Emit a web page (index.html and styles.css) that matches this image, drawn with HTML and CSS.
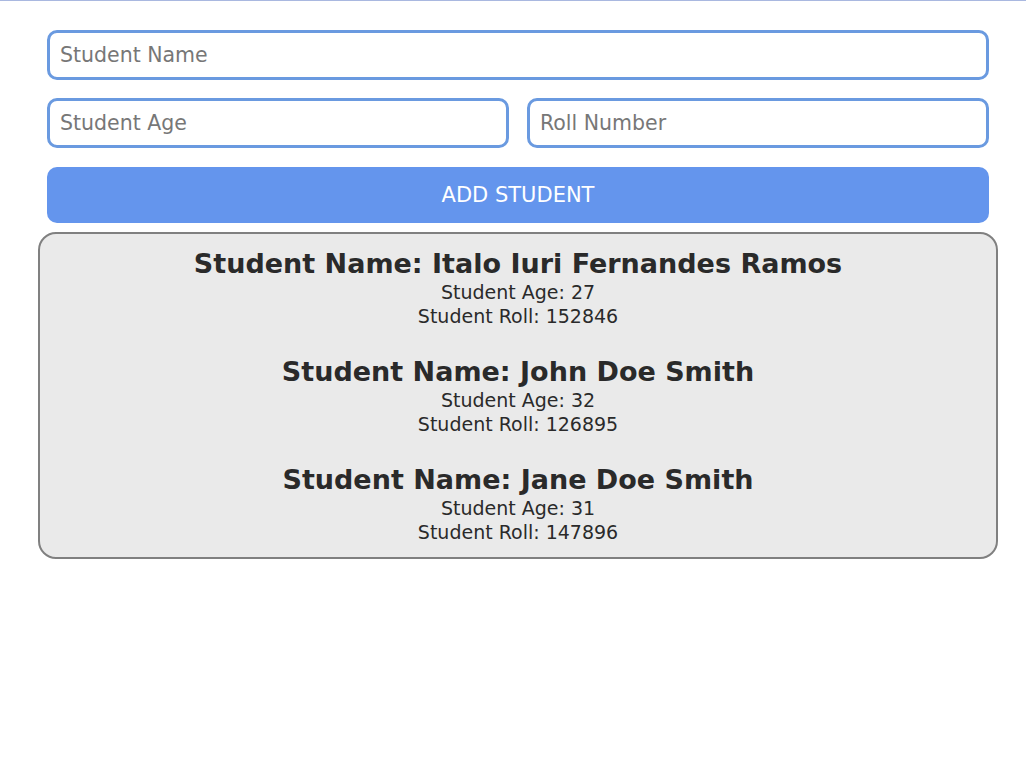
FILE: index.html
```html
<!DOCTYPE html>
<html>
<head>
<meta charset="utf-8">
<link rel="stylesheet" href="styles.css">
</head>
<body>
<div class="topline"></div>
<div class="page">
  <form class="form">
    <input class="field" type="text" placeholder="Student Name">
    <div class="row">
      <input class="field grow" type="text" placeholder="Student Age">
      <input class="field grow" type="text" placeholder="Roll Number">
    </div>
    <button class="add" type="button">ADD STUDENT</button>
  </form>
  <div class="card">
    <div class="student">
      <h2 class="name">Student Name: Italo Iuri Fernandes Ramos</h2>
      <p class="info">Student Age: 27</p>
      <p class="info">Student Roll: 152846</p>
    </div>
    <div class="student">
      <h2 class="name">Student Name: John Doe Smith</h2>
      <p class="info">Student Age: 32</p>
      <p class="info">Student Roll: 126895</p>
    </div>
    <div class="student">
      <h2 class="name">Student Name: Jane Doe Smith</h2>
      <p class="info">Student Age: 31</p>
      <p class="info">Student Roll: 147896</p>
    </div>
  </div>
</div>
</body>
</html>
```

FILE: styles.css
```css
html, body {
  margin: 0;
  padding: 0;
  background: #ffffff;
  font-family: "DejaVu Sans", "Open Sans", sans-serif;
}
.topline {
  height: 1px;
  background: #a9b8e0;
}
.page {
  width: 960px;
  padding: 29px 0 0 38px;
}
.form {
  display: flex;
  flex-direction: column;
  gap: 18px;
  padding: 0 9px;
  margin: 0;
}
.row {
  display: flex;
  gap: 18px;
}
.field {
  box-sizing: border-box;
  height: 50px;
  border: 3px solid #6a9ae0;
  border-radius: 10px;
  padding: 0 10px;
  font-family: inherit;
  font-size: 20.5px;
  color: #333;
  background: #fff;
  outline: none;
}
.grow {
  flex: 1 1 0;
  min-width: 0;
}
.field::placeholder {
  color: #777777;
}
.add {
  height: 56px;
  margin-top: 1px;
  border: none;
  border-radius: 10px;
  background: #6495ed;
  color: #ffffff;
  font-family: inherit;
  font-size: 21px;
  cursor: pointer;
}
.card {
  margin-top: 9px;
  border: 2px solid #808080;
  border-radius: 18px;
  background: #eaeaea;
  padding: 13px 0;
  display: flex;
  flex-direction: column;
  gap: 27px;
  text-align: center;
  color: #2a2a2a;
}
.name {
  margin: 0;
  font-size: 27px;
  line-height: 33px;
  font-weight: 700;
}
.info {
  margin: 0;
  font-size: 19px;
  line-height: 24px;
}
```
